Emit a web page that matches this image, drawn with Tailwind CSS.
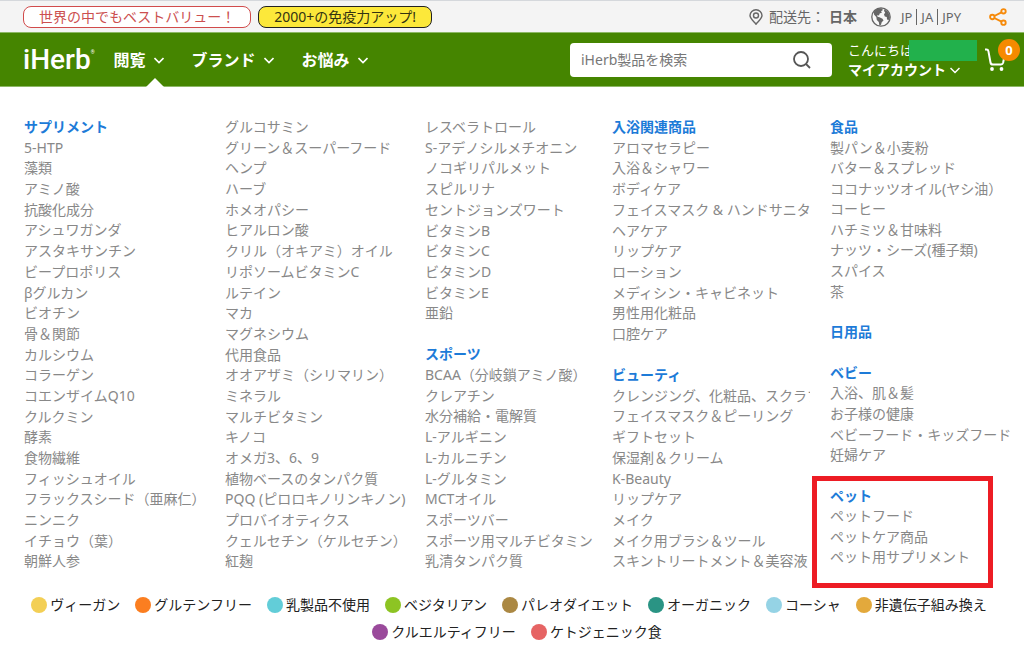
<!DOCTYPE html>
<html lang="ja">
<head>
<meta charset="utf-8">
<meta name="viewport" content="width=device-width, initial-scale=1">
<title>iHerb</title>
<script src="https://cdn.jsdelivr.net/npm/@tailwindcss/browser@4"></script>
</head>
<body class="bg-white font-['Noto_Sans','Noto_Sans_CJK_JP',sans-serif] text-sm leading-5 text-[#888888]">

<div class="flex h-8 items-center justify-between border-t border-[#d5d8dc] bg-[#f4f4f4] pl-[23px] pr-[17px]">
  <div class="flex gap-[7px]">
    <a href="#" class="rounded-lg border border-[#d14b4b] bg-white px-[15px] text-[#cc4f4f] whitespace-nowrap">世界の中でもベストバリュー！</a>
    <a href="#" class="rounded-lg border border-[#222222] bg-[#fce83a] px-[15px] text-[#333311] whitespace-nowrap">2000+の免疫力アップ!</a>
  </div>
  <div class="flex items-center whitespace-nowrap text-[#666666]">
    <a href="#" class="flex items-center">
      <svg class="mr-1.5 h-4 w-3.5" viewBox="0 0 14 16" fill="none" stroke="#666" stroke-width="1.4" aria-hidden="true"><path d="M7 15.2C4.500 12.300 1 9.300 1 6.500a6 5.800 0 0 1 12 0C13 9.300 9.500 12.300 7 15.200Z"/><circle cx="7" cy="6.500" r="2.500"/></svg>
      配送先：<b class="ml-1 font-bold">日本</b>
    </a>
    <button class="ml-[14px] flex items-center text-[13px]">
      <svg class="mr-2.5 h-5 w-5" viewBox="0 0 20 20" aria-hidden="true"><circle cx="10" cy="10" r="9.200" fill="#f8f8f8" stroke="#666" stroke-width="1.300"/><path fill="#666" d="M3 4.500C5 2 8 1 10.500 1.300L12 3l-2 1.200 1 1.300-2.300 1L8 8.500 6.300 8l.2 1.800 2 .4 3 1.500 1 1.800-1.800 1.700-.7 2.500-1.600.8-.6-3.500-2-2L5.300 10 3 7.500ZM13 2.300l3.500 2 2 3.500.4 3.200-1.300 2-1.600-.6-.2-2.400-2-.6-.8-2 1.200-1.800-1-1.400Z"/></svg>
      <span class="border-r border-[#666666] pr-1 leading-4">JP</span><span class="border-r border-[#666666] px-1 leading-4">JA</span><span class="pl-1 leading-4">JPY</span>
    </button>
    <button class="ml-7" aria-label="共有">
      <svg class="h-[18px] w-[18px]" viewBox="0 0 18 18" fill="none" stroke="#f68a0a" stroke-width="1.900" aria-hidden="true"><path d="M5.300 8 12.500 4.300M5.300 10l7.200 3.700"/><circle cx="3.300" cy="9" r="2.200"/><circle cx="14.500" cy="3.300" r="2.200"/><circle cx="14.500" cy="14.700" r="2.200"/></svg>
    </button>
  </div>
</div>

<header class="flex h-[55px] items-center border-y border-[#8db866] bg-[#458500] pl-[23px] pr-1 text-white">
  <a href="#" class="flex shrink-0 font-['Roboto',sans-serif] text-[28px] font-medium leading-8">iHerb<sup class="top-0 text-[5px] leading-4">®</sup></a>
  <nav class="ml-[19px] flex h-full items-center gap-7 whitespace-nowrap text-base font-bold">
    <button class="relative flex h-full items-center gap-2 font-bold" aria-expanded="true">閲覧
      <svg class="h-2.5 w-2.5" viewBox="0 0 10 10" fill="none" stroke="currentColor" stroke-width="1.600" aria-hidden="true"><path d="m.5 3 4.500 4.500L9.500 3"/></svg>
      <svg class="absolute -bottom-px left-8 h-[9px] w-[18px]" viewBox="0 0 18 9" fill="#fff" aria-hidden="true"><path d="M0 9 9 0l9 9Z"/></svg>
    </button>
    <button class="flex items-center gap-2 font-bold">ブランド
      <svg class="h-2.5 w-2.5" viewBox="0 0 10 10" fill="none" stroke="currentColor" stroke-width="1.600" aria-hidden="true"><path d="m.5 3 4.500 4.500L9.500 3"/></svg>
    </button>
    <button class="flex items-center gap-2 font-bold">お悩み
      <svg class="h-2.5 w-2.5" viewBox="0 0 10 10" fill="none" stroke="currentColor" stroke-width="1.600" aria-hidden="true"><path d="m.5 3 4.500 4.500L9.500 3"/></svg>
    </button>
  </nav>
  <form class="ml-auto flex h-[34px] w-[262px] shrink-0 items-center rounded bg-white pl-[11px] pr-5">
    <input type="text" aria-label="検索" placeholder="iHerb製品を検索" class="min-w-0 flex-1 text-sm text-[#555555] outline-none placeholder:text-[#777777]">
    <button type="button" aria-label="検索する">
      <svg class="h-5 w-5" viewBox="0 0 20 20" fill="none" stroke="#555" stroke-width="1.800" aria-hidden="true"><circle cx="9" cy="9" r="7"/><path d="m14 14 4 4"/></svg>
    </button>
  </form>
  <button class="ml-4 shrink-0 whitespace-nowrap text-left">
    <span class="flex h-5 items-center text-[13px]"><span class="w-[61px]">こんにちは</span><span class="relative h-[21px] w-[68px] bg-[#22b14c]"></span></span>
    <span class="flex items-center gap-1 text-sm font-bold leading-[19px]">マイアカウント
      <svg class="h-2.5 w-2.5" viewBox="0 0 10 10" fill="none" stroke="currentColor" stroke-width="1.500" aria-hidden="true"><path d="m.5 3 4.500 4.500L9.500 3"/></svg>
    </span>
  </button>
  <a href="#" class="relative ml-2 h-11 w-[35px] shrink-0" aria-label="カート">
    <svg class="mt-[10px] h-6 w-6" viewBox="0 0 24 24" fill="none" stroke="#fff" stroke-width="2" aria-hidden="true"><path d="M0 1.500h1.500c1.200 0 1.700.6 1.900 1.600L5.500 14.500c.2 1.300 1 2 2.200 2h8.300c1.200 0 1.800-.6 2.100-1.700L19 10.500"/><g fill="#fff" stroke="none"><circle cx="7" cy="21" r="1.900"/><circle cx="16.500" cy="21" r="1.900"/></g></svg>
    <span class="absolute right-0 top-px flex h-[22px] w-[22px] items-center justify-center rounded-full bg-[#f68a00] text-[13px] font-bold">0</span>
  </a>
</header>

<main>
  <!-- Mega menu: rows share the panel height evenly -->
  <div class="grid min-h-[455px] grid-cols-[201fr_200fr_187fr_218fr_186fr] whitespace-nowrap pl-6 pr-2 mt-[30px] [&>ul]:flex [&>ul]:min-w-0 [&>ul]:flex-col [&>ul>li]:flex-1 [&_h2]:font-bold [&_h2]:text-[#1d7bd8]">
    <ul>
      <li><h2><a href="#">サプリメント</a></h2></li>
      <li><a href="#">5-HTP</a></li>
      <li><a href="#">藻類</a></li>
      <li><a href="#">アミノ酸</a></li>
      <li><a href="#">抗酸化成分</a></li>
      <li><a href="#">アシュワガンダ</a></li>
      <li><a href="#">アスタキサンチン</a></li>
      <li><a href="#">ビープロポリス</a></li>
      <li><a href="#">βグルカン</a></li>
      <li><a href="#">ビオチン</a></li>
      <li><a href="#">骨＆関節</a></li>
      <li><a href="#">カルシウム</a></li>
      <li><a href="#">コラーゲン</a></li>
      <li><a href="#">コエンザイムQ10</a></li>
      <li><a href="#">クルクミン</a></li>
      <li><a href="#">酵素</a></li>
      <li><a href="#">食物繊維</a></li>
      <li><a href="#">フィッシュオイル</a></li>
      <li><a href="#">フラックスシード（亜麻仁）</a></li>
      <li><a href="#">ニンニク</a></li>
      <li><a href="#">イチョウ（葉）</a></li>
      <li><a href="#">朝鮮人参</a></li>
    </ul>
    <ul>
      <li><a href="#">グルコサミン</a></li>
      <li><a href="#">グリーン＆スーパーフード</a></li>
      <li><a href="#">ヘンプ</a></li>
      <li><a href="#">ハーブ</a></li>
      <li><a href="#">ホメオパシー</a></li>
      <li><a href="#">ヒアルロン酸</a></li>
      <li><a href="#">クリル（オキアミ）オイル</a></li>
      <li><a href="#">リポソームビタミンC</a></li>
      <li><a href="#">ルテイン</a></li>
      <li><a href="#">マカ</a></li>
      <li><a href="#">マグネシウム</a></li>
      <li><a href="#">代用食品</a></li>
      <li><a href="#">オオアザミ（シリマリン）</a></li>
      <li><a href="#">ミネラル</a></li>
      <li><a href="#">マルチビタミン</a></li>
      <li><a href="#">キノコ</a></li>
      <li><a href="#">オメガ3、6、9</a></li>
      <li><a href="#">植物ベースのタンパク質</a></li>
      <li><a href="#">PQQ (ピロロキノリンキノン)</a></li>
      <li><a href="#">プロバイオティクス</a></li>
      <li><a href="#">クェルセチン（ケルセチン）</a></li>
      <li><a href="#">紅麹</a></li>
    </ul>
    <ul>
      <li><a href="#">レスベラトロール</a></li>
      <li><a href="#">S-アデノシルメチオニン</a></li>
      <li><a href="#">ノコギリパルメット</a></li>
      <li><a href="#">スピルリナ</a></li>
      <li><a href="#">セントジョンズワート</a></li>
      <li><a href="#">ビタミンB</a></li>
      <li><a href="#">ビタミンC</a></li>
      <li><a href="#">ビタミンD</a></li>
      <li><a href="#">ビタミンE</a></li>
      <li><a href="#">亜鉛</a></li>
      <li class="mt-5"><h2><a href="#">スポーツ</a></h2></li>
      <li><a href="#">BCAA（分岐鎖アミノ酸）</a></li>
      <li><a href="#">クレアチン</a></li>
      <li><a href="#">水分補給・電解質</a></li>
      <li><a href="#">L-アルギニン</a></li>
      <li><a href="#">L-カルニチン</a></li>
      <li><a href="#">L-グルタミン</a></li>
      <li><a href="#">MCTオイル</a></li>
      <li><a href="#">スポーツバー</a></li>
      <li><a href="#">スポーツ用マルチビタミン</a></li>
      <li><a href="#">乳清タンパク質</a></li>
    </ul>
    <ul class="mr-5 overflow-hidden">
      <li><h2><a href="#">入浴関連商品</a></h2></li>
      <li><a href="#">アロマセラピー</a></li>
      <li><a href="#">入浴＆シャワー</a></li>
      <li><a href="#">ボディケア</a></li>
      <li><a href="#">フェイスマスク &amp; ハンドサニタ</a></li>
      <li><a href="#">ヘアケア</a></li>
      <li><a href="#">リップケア</a></li>
      <li><a href="#">ローション</a></li>
      <li><a href="#">メディシン・キャビネット</a></li>
      <li><a href="#">男性用化粧品</a></li>
      <li><a href="#">口腔ケア</a></li>
      <li class="mt-5"><h2><a href="#">ビューティ</a></h2></li>
      <li><a href="#">クレンジング、化粧品、スクラブ</a></li>
      <li><a href="#">フェイスマスク＆ピーリング</a></li>
      <li><a href="#">ギフトセット</a></li>
      <li><a href="#">保湿剤＆クリーム</a></li>
      <li><a href="#">K-Beauty</a></li>
      <li><a href="#">リップケア</a></li>
      <li><a href="#">メイク</a></li>
      <li><a href="#">メイク用ブラシ＆ツール</a></li>
      <li><a href="#">スキントリートメント＆美容液</a></li>
    </ul>
    <ul class="pb-1">
      <li><h2><a href="#">食品</a></h2></li>
      <li><a href="#">製パン＆小麦粉</a></li>
      <li><a href="#">バター＆スプレッド</a></li>
      <li><a href="#">ココナッツオイル(ヤシ油）</a></li>
      <li><a href="#">コーヒー</a></li>
      <li><a href="#">ハチミツ＆甘味料</a></li>
      <li><a href="#">ナッツ・シーズ(種子類)</a></li>
      <li><a href="#">スパイス</a></li>
      <li><a href="#">茶</a></li>
      <li class="mt-5"><h2><a href="#">日用品</a></h2></li>
      <li class="mt-5"><h2><a href="#">ベビー</a></h2></li>
      <li><a href="#">入浴、肌＆髪</a></li>
      <li><a href="#">お子様の健康</a></li>
      <li><a href="#">ベビーフード・キッズフード</a></li>
      <li><a href="#">妊婦ケア</a></li>
      <li class="relative mt-5"><h2><a href="#">ペット</a></h2><span class="pointer-events-none absolute -left-[18px] -top-2.5 h-28 w-[181px] border-5 border-[#ed1c24]"></span></li>
      <li><a href="#">ペットフード</a></li>
      <li><a href="#">ペットケア商品</a></li>
      <li><a href="#">ペット用サプリメント</a></li>
    </ul>
  </div>

  <div class="mt-[23px] flex flex-col gap-[7px] whitespace-nowrap text-[#222222] [&_a]:flex [&_a]:items-center [&_a]:gap-[3px] [&_i]:size-4 [&_i]:rounded-full">
    <ul class="flex flex-wrap justify-center gap-x-[15px] pr-1.5">
      <li><a href="#"><i class="bg-[#f3cf55]"></i>ヴィーガン</a></li>
      <li><a href="#"><i class="bg-[#fb7e20]"></i>グルテンフリー</a></li>
      <li><a href="#"><i class="bg-[#62cdd8]"></i>乳製品不使用</a></li>
      <li><a href="#"><i class="bg-[#8dc423]"></i>ベジタリアン</a></li>
      <li><a href="#"><i class="bg-[#ab8843]"></i>パレオダイエット</a></li>
      <li><a href="#"><i class="bg-[#2a9484]"></i>オーガニック</a></li>
      <li><a href="#"><i class="bg-[#95d3e5]"></i>コーシャ</a></li>
      <li><a href="#"><i class="bg-[#e3a93c]"></i>非遺伝子組み換え</a></li>
    </ul>
    <ul class="flex flex-wrap justify-center gap-x-[15px] pl-2.5">
      <li><a href="#"><i class="bg-[#9a4a9b]"></i>クルエルティフリー</a></li>
      <li><a href="#"><i class="bg-[#e66464]"></i>ケトジェニック食</a></li>
    </ul>
  </div>
</main>
</body>
</html>
